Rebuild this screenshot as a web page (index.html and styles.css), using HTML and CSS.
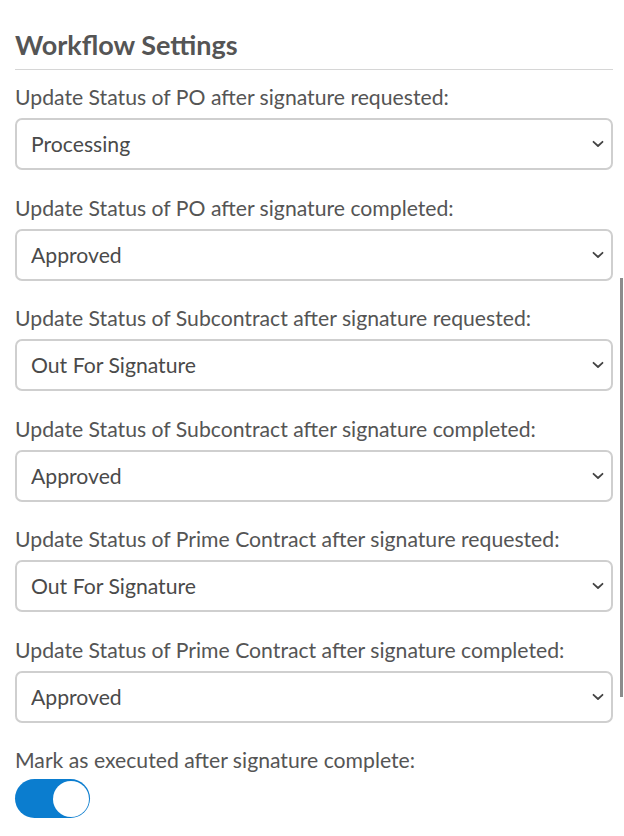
FILE: index.html
```html
<!DOCTYPE html>
<html lang="en">
    <head>
        <meta charset="UTF-8" />
        <meta name="viewport" content="width=device-width, initial-scale=1.0" />
        <title>Workflow Settings</title>
        <link rel="stylesheet" href="styles.css">
    </head>
    <body>
        <div class="panel">
            <h2 class="panel-title">Workflow Settings</h2>

            <div class="field">
                <label class="field-label" for="po-requested">Update Status of PO after signature requested:</label>
                <div class="select-wrap">
                    <select class="select" id="po-requested">
                        <option selected>Processing</option>
                        <option>Approved</option>
                        <option>Out For Signature</option>
                    </select>
                    <svg class="chevron" width="12" height="8" viewBox="0 0 12 8" fill="none" stroke="currentColor" stroke-width="1.8" stroke-linecap="round" stroke-linejoin="round">
                        <polyline points="1.5 1.8 6 6 10.5 1.8"></polyline>
                    </svg>
                </div>
            </div>

            <div class="field">
                <label class="field-label" for="po-completed">Update Status of PO after signature completed:</label>
                <div class="select-wrap">
                    <select class="select" id="po-completed">
                        <option>Processing</option>
                        <option selected>Approved</option>
                        <option>Out For Signature</option>
                    </select>
                    <svg class="chevron" width="12" height="8" viewBox="0 0 12 8" fill="none" stroke="currentColor" stroke-width="1.8" stroke-linecap="round" stroke-linejoin="round">
                        <polyline points="1.5 1.8 6 6 10.5 1.8"></polyline>
                    </svg>
                </div>
            </div>

            <div class="field">
                <label class="field-label" for="sub-requested">Update Status of Subcontract after signature requested:</label>
                <div class="select-wrap">
                    <select class="select" id="sub-requested">
                        <option>Processing</option>
                        <option>Approved</option>
                        <option selected>Out For Signature</option>
                    </select>
                    <svg class="chevron" width="12" height="8" viewBox="0 0 12 8" fill="none" stroke="currentColor" stroke-width="1.8" stroke-linecap="round" stroke-linejoin="round">
                        <polyline points="1.5 1.8 6 6 10.5 1.8"></polyline>
                    </svg>
                </div>
            </div>

            <div class="field">
                <label class="field-label" for="sub-completed">Update Status of Subcontract after signature completed:</label>
                <div class="select-wrap">
                    <select class="select" id="sub-completed">
                        <option>Processing</option>
                        <option selected>Approved</option>
                        <option>Out For Signature</option>
                    </select>
                    <svg class="chevron" width="12" height="8" viewBox="0 0 12 8" fill="none" stroke="currentColor" stroke-width="1.8" stroke-linecap="round" stroke-linejoin="round">
                        <polyline points="1.5 1.8 6 6 10.5 1.8"></polyline>
                    </svg>
                </div>
            </div>

            <div class="field">
                <label class="field-label" for="prime-requested">Update Status of Prime Contract after signature requested:</label>
                <div class="select-wrap">
                    <select class="select" id="prime-requested">
                        <option>Processing</option>
                        <option>Approved</option>
                        <option selected>Out For Signature</option>
                    </select>
                    <svg class="chevron" width="12" height="8" viewBox="0 0 12 8" fill="none" stroke="currentColor" stroke-width="1.8" stroke-linecap="round" stroke-linejoin="round">
                        <polyline points="1.5 1.8 6 6 10.5 1.8"></polyline>
                    </svg>
                </div>
            </div>

            <div class="field">
                <label class="field-label" for="prime-completed">Update Status of Prime Contract after signature completed:</label>
                <div class="select-wrap">
                    <select class="select" id="prime-completed">
                        <option>Processing</option>
                        <option selected>Approved</option>
                        <option>Out For Signature</option>
                    </select>
                    <svg class="chevron" width="12" height="8" viewBox="0 0 12 8" fill="none" stroke="currentColor" stroke-width="1.8" stroke-linecap="round" stroke-linejoin="round">
                        <polyline points="1.5 1.8 6 6 10.5 1.8"></polyline>
                    </svg>
                </div>
            </div>

            <div class="field field-toggle">
                <span class="field-label">Mark as executed after signature complete:</span>
                <div class="toggle is-on">
                    <span class="toggle-knob"></span>
                </div>
            </div>
        </div>
        <div class="scroll-thumb"></div>
    </body>
</html>
```

FILE: styles.css
```css
*,
*::before,
*::after {
    box-sizing: border-box;
}

body {
    margin: 0;
    background: #fff;
    font-family: Lato, "Open Sans", sans-serif;
    color: #555;
}

.panel {
    padding: 28.5px 11px 0 15px;
}

.panel-title {
    margin: 0 0 14px;
    padding-bottom: 8.5px;
    border-bottom: 1px solid #d6d6d6;
    font-size: 27px;
    line-height: 32px;
    font-weight: 700;
    color: #555;
}

.field {
    margin-bottom: 24.5px;
}

.field-label {
    display: block;
    margin-bottom: 8px;
    font-size: 21.2px;
    line-height: 26px;
    color: #555;
}

.select-wrap {
    position: relative;
}

.select {
    display: block;
    width: 100%;
    height: 52px;
    padding: 0 40px 0 14px;
    border: 2px solid #cfcfcf;
    border-radius: 7px;
    background: #fff;
    font-family: inherit;
    font-size: 21.2px;
    color: #4a4a4a;
    appearance: none;
    -webkit-appearance: none;
    outline: none;
}

.chevron {
    position: absolute;
    right: 9px;
    top: 50%;
    transform: translateY(-50%);
    color: #444;
    pointer-events: none;
}

.field-toggle .field-label {
    margin-bottom: 6px;
}

.toggle {
    display: flex;
    justify-content: flex-start;
    align-items: center;
    width: 75px;
    height: 39px;
    padding: 1.5px;
    border-radius: 20px;
    background: #ccc;
}
.toggle.is-on {
    justify-content: flex-end;
    background: #0b7dcf;
}

.toggle-knob {
    width: 36px;
    height: 36px;
    border-radius: 50%;
    background: #fff;
}

.scroll-thumb {
    position: fixed;
    top: 278px;
    right: 1px;
    width: 3px;
    height: 419px;
    background: #8c8c8c;
}
```
